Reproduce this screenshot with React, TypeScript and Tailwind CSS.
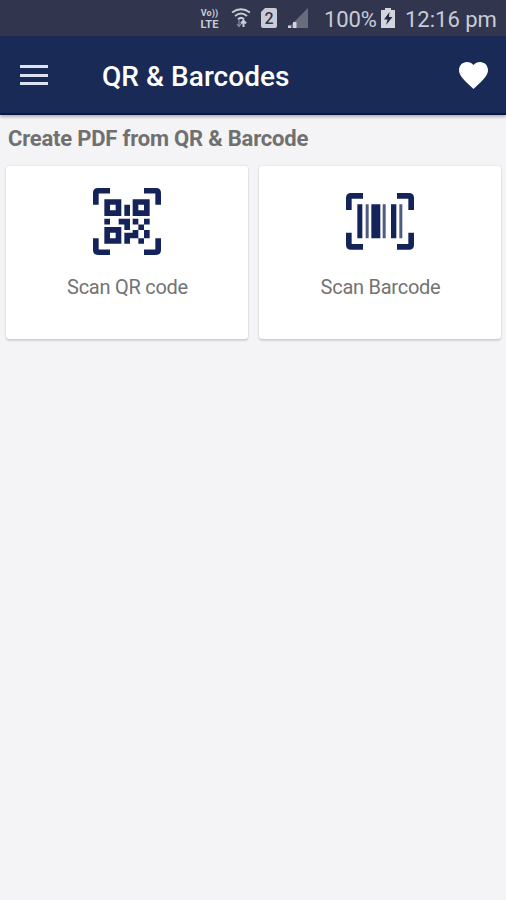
import React from 'react';

interface ScanCardProps {
  label: string;
  children: React.ReactNode;
}

const ScanCard: React.FC<ScanCardProps> = ({ label, children }) => {
  return (
    <button className="flex h-[173px] flex-1 flex-col items-center rounded-[3px] bg-white pt-[22px] shadow-[0_0_2px_rgba(0,0,0,0.16),0_2px_2px_rgba(0,0,0,0.12)]">
      <span className="flex h-[67px] items-center">{children}</span>
      <span className="mt-[20px] pl-px text-[20px] leading-6 tracking-[-0.26px] text-[#737373]">{label}</span>
    </button>
  );
};

const QrIcon: React.FC = () => (
  <svg className="h-[67px] w-[68px]" viewBox="0 0 204 204" preserveAspectRatio="none" fill="#14245a">
    <path d="M15 0H51V17H17V51H0V15Q0 0 15 0Z" />
    <path d="M153 0H189Q204 0 204 15V51H187V17H153Z" />
    <path d="M0 153H17V187H51V204H15Q0 204 0 189Z" />
    <path d="M187 153H204V189Q204 204 189 204H153V187H187Z" />
    <path
      fillRule="evenodd"
      d="M34 34H85V85H34ZM51 51V68H68V51ZM119 34H170V85H119ZM136 51V68H153V51ZM34 119H85V170H34ZM51 136V153H68V136Z"
    />
    <path d="M94 51H111V85H94Z" />
    <path d="M34 94H51V111H34ZM77 94H111V128H94V111H77Z" />
    <path d="M119 94H136V111H119ZM153 94H170V111H153ZM136 111H153V128H136Z" />
    <path d="M119 128H136V153H111V170H94V136H119ZM153 128H170V153H153ZM136 153H153V170H136Z" />
  </svg>
);

const BarcodeIcon: React.FC = () => (
  <svg className="h-[57px] w-[68px]" viewBox="0 0 204 171" fill="#14245a">
    <path d="M15 0H51V17H17V51H0V15Q0 0 15 0Z" />
    <path d="M153 0H189Q204 0 204 15V51H187V17H153Z" />
    <path d="M0 119H17V153H51V170H15Q0 170 0 155Z" />
    <path d="M187 119H204V155Q204 170 189 170H153V153H187Z" />
    <path d="M34 34H49V136H34ZM76 34H103V136H76ZM135 34H151V136H135Z" />
    <path fillOpacity="0.75" d="M59 34H68V136H59ZM110 34H119V136H110ZM160 34H169V136H160Z" />
  </svg>
);

const StatusBar: React.FC = () => (
  <div className="flex h-9 items-center bg-[#31364e] text-[#c9ccd6]">
    <div className="ml-[199px] flex w-[21px] flex-col items-center pt-px font-bold">
      <span className="text-[9px] leading-[11px] tracking-[0.1px]">Vo))</span>
      <span className="text-[11px] leading-[11px] tracking-[0.1px]">LTE</span>
    </div>
    <svg className="ml-[11px] h-[22px] w-[20px]" viewBox="0 0 20 22" fill="none" stroke="currentColor">
      <path d="M1 5.5Q10-1 19 5.5" strokeWidth="1.8" />
      <path d="M4 9Q10 4 16 9" strokeWidth="1.8" />
      <path d="M7 12.3Q10 9.5 13 12.3" strokeWidth="2" />
      <path d="M8 13V19M6 17L8 19.5L10 17" strokeWidth="1.2" opacity="0.6" />
      <path d="M12.5 20V14M10 16.5L12.5 13.5L15 16.5" strokeWidth="2" />
    </svg>
    <svg className="ml-[10px] h-[22px] w-[16px]" viewBox="0 0 16 22">
      <path d="M4 1H14Q16 1 16 3V19Q16 21 14 21H2Q0 21 0 19V5Z" fill="#c9ccd6" />
      <text x="8" y="16.5" textAnchor="middle" fontSize="16" fontWeight="500" fill="#31364e">
        2
      </text>
    </svg>
    <svg className="ml-[11px] h-[20px] w-[20px]" viewBox="0 0 20 20">
      <path d="M20 0V20H0Z" fill="#686c7d" />
      <path d="M0 20V17.5H3V20ZM5 20V14H8.5V20Z" fill="#d3d5dd" />
    </svg>
    <span className="ml-[16px] w-[53px] pt-[2px] text-[22px] tracking-[-0.1px] whitespace-nowrap">100%</span>
    <svg className="ml-[4px] h-[20px] w-[14px]" viewBox="0 0 14 20">
      <path d="M4 0H10V2H14V20H0V2H4Z" fill="#d3d5dd" />
      <path d="M8.5 4L3 11.5H6.5L5 17L11.5 9H8Z" fill="#252a40" />
    </svg>
    <span className="ml-[10px] pt-[2px] text-[22px] whitespace-nowrap">12:16 pm</span>
  </div>
);

const App: React.FC = () => {
  return (
    <div className="h-[900px] w-[506px] overflow-hidden bg-[#f4f4f6] font-[Roboto,sans-serif]">
      <StatusBar />
      <header className="flex h-[79px] items-center border-b-2 border-[#0b1748] bg-[#192a56] pr-[18px] pl-[20px] text-white shadow-[0_2px_3px_rgba(0,0,0,0.28)]">
        <button aria-label="Menu" className="mt-px flex h-5 w-7 flex-col justify-between">
          <span className="h-[3px] w-7 bg-[#dce2f1]" />
          <span className="h-[3px] w-7 bg-[#dce2f1]" />
          <span className="h-[3px] w-7 bg-[#dce2f1]" />
        </button>
        <h1 className="ml-[54px] pt-[4px] text-[28px] font-medium tracking-[0.05px]">QR &amp; Barcodes</h1>
        <button aria-label="Favourites" className="mt-px ml-auto">
          <svg className="h-[27px] w-[29px]" viewBox="2 3 20 18.35" preserveAspectRatio="none" fill="currentColor">
            <path d="M12 21.35l-1.45-1.32C5.4 15.36 2 12.28 2 8.5 2 5.42 4.42 3 7.5 3c1.74 0 3.41.81 4.5 2.09C13.09 3.81 14.76 3 16.5 3 19.58 3 22 5.42 22 8.5c0 3.78-3.4 6.86-8.55 11.54L12 21.35z" />
          </svg>
        </button>
      </header>
      <main>
        <h2 className="h-[51px] pt-[10px] pl-[8px] text-[22px] leading-7 font-bold tracking-[-0.2px] text-[#707070]">
          Create PDF from QR &amp; Barcode
        </h2>
        <div className="flex gap-[11px] pr-[5px] pl-[6px]">
          <ScanCard label="Scan QR code">
            <QrIcon />
          </ScanCard>
          <ScanCard label="Scan Barcode">
            <BarcodeIcon />
          </ScanCard>
        </div>
      </main>
    </div>
  );
};

export default App;
